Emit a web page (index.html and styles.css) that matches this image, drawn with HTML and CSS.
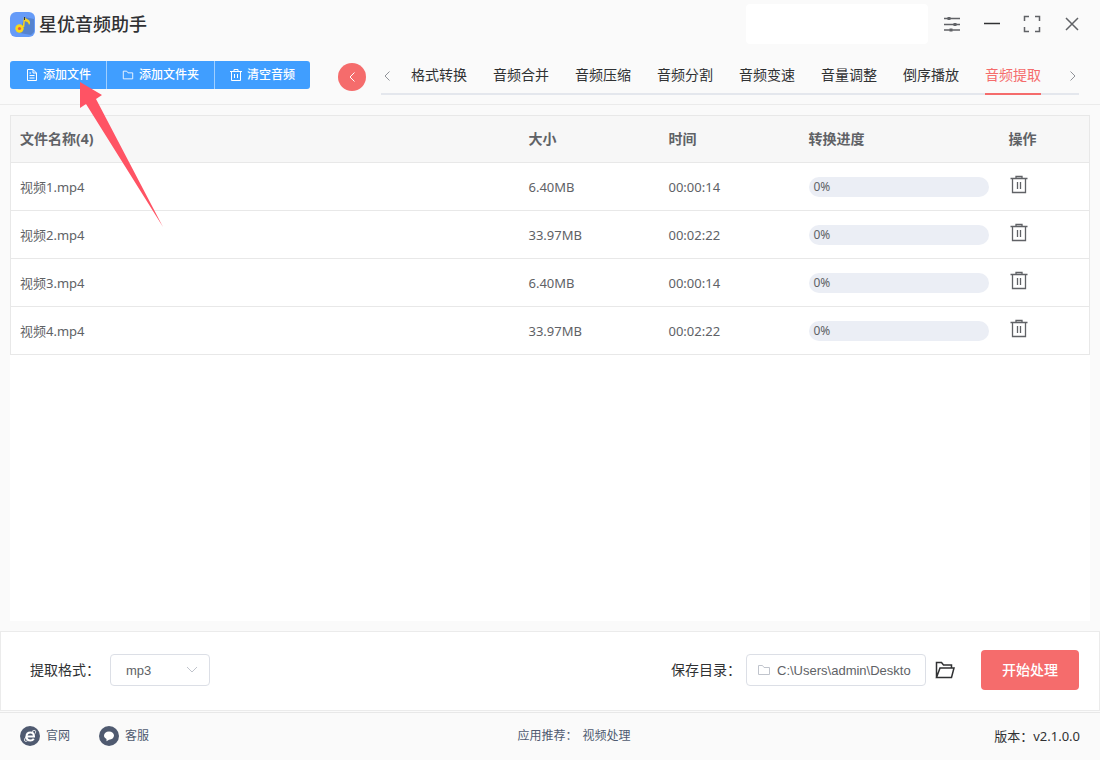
FILE: index.html
```html
<!DOCTYPE html>
<html lang="zh-CN">
<head>
    <meta charset="UTF-8">
    <meta name="viewport" content="width=device-width, initial-scale=1.0">
    <title>星优音频助手</title>
    <link rel="stylesheet" href="styles.css">
</head>
<body>
    <!-- shared icons -->
    <svg class="sprite" aria-hidden="true">
        <symbol id="trash" viewBox="0 0 18 20">
            <path d="M0.5 3.5h17M6 3V1.5h6V3M2.5 4v13.5h13V4M7.500 7v7M10.500 7v7"/>
        </symbol>
        <symbol id="folder" viewBox="0 0 14 12">
            <path d="M1.5 1.5h4l1.5 2h5.500v7h-11z"/>
        </symbol>
        <symbol id="left" viewBox="0 0 8 12">
            <path d="M6.500 1.500L2 6l4.500 4.500"/>
        </symbol>
    </svg>

    <header class="titlebar">
        <svg class="logo" viewBox="0 0 25 25">
            <rect width="25" height="25" rx="6" fill="#659bf8"/>
            <path d="M14 5l10 2v13l-3 3-11-2z" fill="#5583cf"/>
            <path d="M13.500 15l1-9.500" stroke="#f6d321" stroke-width="1.500"/>
            <path d="M14 5c1.500 2 5.500 2 6 5 .3 1.500-.5 2.500-1 3-.5-3-2.500-3.500-4.500-4z" fill="#f6d321"/>
            <circle cx="9.500" cy="16.500" r="4.200" fill="#fbd918"/>
            <circle cx="9.500" cy="16.500" r="1.600" fill="#ec5847"/>
            <path d="M14.500 5v3" stroke="#333" stroke-width="1"/>
        </svg>
        <h1>星优音频助手</h1>
        <div class="blank"></div>
        <div class="window-buttons">
            <button aria-label="设置">
                <svg width="16" height="16" viewBox="0 0 16 16"><path d="M0 2.500h16M0 8.500h16M0 14h16"/><path class="dot" d="M5 1v3M11 7v3M7 12.500v3"/></svg>
            </button>
            <button aria-label="最小化">
                <svg width="16" height="16" viewBox="0 0 16 16"><path class="dark" d="M0 7.500h16"/></svg>
            </button>
            <button aria-label="最大化">
                <svg width="18" height="18" viewBox="0 0 18 18"><path d="M1.500 6V1.500H6M12 1.500h4.500V6M16.500 12v4.500H12M6 16.500H1.500V12"/></svg>
            </button>
            <button aria-label="关闭">
                <svg width="14" height="14" viewBox="0 0 14 14"><path d="M1 1l12 12M13 1L1 13"/></svg>
            </button>
        </div>
    </header>

    <div class="toolbar">
        <div class="button-group">
            <button>
                <svg width="12" height="12" viewBox="0 0 12 12"><path d="M1.500.5H7l3.500 3.500v7.500h-9zM7 .5V4h3.500M3.500 4H5M3.500 6.500h5M3.500 9h5"/></svg>
                添加文件
            </button>
            <button>
                <svg width="12" height="12"><use href="#folder"/></svg>
                添加文件夹
            </button>
            <button>
                <svg width="12" height="12" viewBox="0 0 12 12"><path d="M0 2.500h12M4 2V.5h4V2M1.500 3v8.500h9V3M4.500 5v4M7.500 5v4"/></svg>
                清空音频
            </button>
        </div>
        <button class="back" aria-label="返回"><svg width="8" height="12"><use href="#left"/></svg></button>
        <nav class="tabs">
            <button class="arrow" aria-label="向左"><svg width="8" height="12"><use href="#left"/></svg></button>
            <a href="#">格式转换</a>
            <a href="#">音频合并</a>
            <a href="#">音频压缩</a>
            <a href="#">音频分割</a>
            <a href="#">音频变速</a>
            <a href="#">音量调整</a>
            <a href="#">倒序播放</a>
            <a href="#" class="active">音频提取</a>
            <button class="arrow next" aria-label="向右"><svg width="8" height="12"><use href="#left"/></svg></button>
        </nav>
    </div>

    <main>
        <table>
            <thead>
                <tr>
                    <th>文件名称(4)</th>
                    <th class="col-size">大小</th>
                    <th class="col-time">时间</th>
                    <th class="col-progress">转换进度</th>
                    <th class="col-action">操作</th>
                </tr>
            </thead>
            <tbody>
                <tr>
                    <td>视频1.mp4</td>
                    <td>6.40MB</td>
                    <td>00:00:14</td>
                    <td><div class="progress">0%</div></td>
                    <td><button class="delete" aria-label="删除"><svg width="18" height="20"><use href="#trash"/></svg></button></td>
                </tr>
                <tr>
                    <td>视频2.mp4</td>
                    <td>33.97MB</td>
                    <td>00:02:22</td>
                    <td><div class="progress">0%</div></td>
                    <td><button class="delete" aria-label="删除"><svg width="18" height="20"><use href="#trash"/></svg></button></td>
                </tr>
                <tr>
                    <td>视频3.mp4</td>
                    <td>6.40MB</td>
                    <td>00:00:14</td>
                    <td><div class="progress">0%</div></td>
                    <td><button class="delete" aria-label="删除"><svg width="18" height="20"><use href="#trash"/></svg></button></td>
                </tr>
                <tr>
                    <td>视频4.mp4</td>
                    <td>33.97MB</td>
                    <td>00:02:22</td>
                    <td><div class="progress">0%</div></td>
                    <td><button class="delete" aria-label="删除"><svg width="18" height="20"><use href="#trash"/></svg></button></td>
                </tr>
            </tbody>
        </table>
    </main>

    <section class="settings">
        <label for="format">提取格式：</label>
        <div class="select-box">
            <select id="format">
                <option>mp3</option>
            </select>
            <svg width="12" height="8" viewBox="0 0 12 8"><path d="M1 1l5 5 5-5"/></svg>
        </div>
        <label for="path" class="path-label">保存目录：</label>
        <div class="path-box">
            <svg width="14" height="12"><use href="#folder"/></svg>
            <input id="path" type="text" value="C:\Users\admin\Deskto">
        </div>
        <button class="open" aria-label="打开目录">
            <svg width="20" height="18" viewBox="0 0 20 18"><path d="M1.500 16.500V1.500h5l2 2.500h8v3M1.500 16.500L5 7h14l-2.500 9.500z"/></svg>
        </button>
        <button class="start">开始处理</button>
    </section>

    <footer>
        <div class="links">
            <a href="#">
                <svg width="20" height="20" viewBox="0 0 20 20">
                    <circle cx="10" cy="10" r="10" fill="#4f5a70"/>
                    <path d="M7.500 10.500h6.500c0-2.500-1-4-3.500-4s-4 1.500-4 4 1.500 4 4 4c1.500 0 2.500-.5 3.300-1.800" fill="none" stroke="#fff" stroke-width="2"/>
                    <path d="M6.500 10c-3 4-2.500 6.500 1 4.800M12 5.500c3-2 4.500-1 3.200 2" fill="none" stroke="#fff" stroke-width="1"/>
                </svg>
                官网
            </a>
            <a href="#">
                <svg width="20" height="20" viewBox="0 0 20 20">
                    <circle cx="10" cy="10" r="10" fill="#4f5a70"/>
                    <path d="M10 5.500c3 0 5 1.800 5 4s-2 4.200-5 4.200l-2.500 1.500V13C6 12.200 5 11.200 5 9.500c0-2.200 2-4 5-4z" fill="#fff"/>
                </svg>
                客服
            </a>
        </div>
        <div class="recommend">应用推荐：<a href="#">视频处理</a></div>
        <div class="version">版本：v2.1.0.0</div>
    </footer>

    <!-- pointer to the add file button -->
    <svg class="pointer" width="84" height="146" viewBox="0 0 84 146">
        <path d="M0 0l22 13-6 4 67 128L6 22l-6 4z" fill="#ff5364"/>
    </svg>
</body>
</html>
```

FILE: styles.css
```css
* {
    box-sizing: border-box;
}
body {
    margin: 0;
    min-height: 100vh;
    display: flex;
    flex-direction: column;
    position: relative;
    background-color: #fafafa;
    color: #303133;
    font-family: "Noto Sans", "Noto Sans CJK SC", sans-serif;
    font-size: 14px;
    line-height: 20px;
}
button {
    display: flex;
    align-items: center;
    justify-content: center;
    padding: 0;
    border: 0;
    background: none;
    color: inherit;
    font: inherit;
    white-space: nowrap;
    cursor: pointer;
}
a {
    color: inherit;
    text-decoration: none;
}
svg {
    display: block;
    flex: none;
    fill: none;
    stroke: currentColor;
}
.sprite {
    position: absolute;
    width: 0;
    height: 0;
}
.titlebar {
    display: flex;
    align-items: center;
    height: 48px;
    padding: 0 20px 0 10px;
}
.logo {
    width: 25px;
    height: 25px;
    stroke: none;
}
h1 {
    margin: 0 0 0 4px;
    font-size: 18px;
    font-weight: 500;
}
.blank {
    width: 182px;
    height: 40px;
    margin-left: auto;
    border-radius: 4px;
    background-color: #fff;
}
.window-buttons {
    display: flex;
    gap: 24px;
    margin-left: 16px;
    color: #606266;
}
.window-buttons button {
    width: 16px;
    height: 20px;
}
.window-buttons svg {
    stroke-width: 1.5;
}
.window-buttons .dot {
    stroke-width: 3;
}
.window-buttons .dark {
    stroke: #303133;
}
.toolbar {
    display: flex;
    align-items: center;
    height: 57px;
    padding: 2px 24px 0 10px;
    border-bottom: 1px solid #ebebeb;
}
.button-group {
    display: flex;
    flex: none;
    margin-bottom: 4px;
    border-radius: 3px;
    background-color: #409eff;
    color: #fff;
    font-size: 12px;
    font-weight: 500;
}
.button-group button {
    gap: 5px;
    height: 28px;
    padding: 0 15px 0 16px;
}
.button-group button + button {
    padding-left: 15px;
    border-left: 1px solid #a0cfff;
}
.back {
    flex: none;
    width: 28px;
    height: 28px;
    margin-left: 28px;
    border-radius: 50%;
    background-color: #f56c6c;
    color: #fff;
}
.tabs {
    display: flex;
    flex: 1;
    gap: 26px;
    height: 36px;
    margin-left: 15px;
    border-bottom: 2px solid #e4e7ed;
}
.tabs a {
    height: 36px;
    line-height: 32px;
    white-space: nowrap;
}
.tabs .active {
    border-bottom: 2px solid #f56c6c;
    color: #f56c6c;
}
.arrow {
    width: 12px;
    margin-right: -8px;
    color: #909399;
}
.arrow.next {
    margin: 0 0 0 auto;
    transform: rotate(180deg);
}
main {
    flex: 1;
    margin: 10px;
    background-color: #fff;
}
table {
    width: 100%;
    table-layout: fixed;
    border-collapse: collapse;
    border: 1px solid #e8e8e8;
    color: #606266;
}
th, td {
    height: 48px;
    padding: 0 10px;
    border-bottom: 1px solid #e8e8e8;
    text-align: left;
}
th {
    height: 47px;
    background-color: #f7f7f7;
    font-weight: bold;
}
td {
    font-size: 13px;
}
th:first-child, td:first-child {
    padding-left: 9px;
}
.col-size, .col-time {
    width: 140px;
}
.col-progress {
    width: 200px;
}
.col-action {
    width: 91px;
}
.progress {
    height: 20px;
    padding-left: 5px;
    border-radius: 10px;
    background-color: #ebeef5;
    font-size: 12px;
}
.delete {
    width: 20px;
    height: 20px;
    margin-bottom: 4px;
}
.delete svg {
    stroke-width: 1.3;
}
.settings {
    display: flex;
    align-items: center;
    height: 80px;
    padding: 0 20px 2px 29px;
    border: 1px solid #ebebeb;
    background-color: #fff;
}
.select-box, .path-box {
    display: flex;
    align-items: center;
    height: 32px;
    margin-left: 10px;
    border: 1px solid #dcdfe6;
    border-radius: 4px;
    color: #c0c4cc;
}
.select-box {
    width: 100px;
    padding-right: 11px;
}
.path-box {
    width: 180px;
    margin-left: 5px;
    padding: 0 10px;
    gap: 6px;
}
select, input {
    flex: 1;
    min-width: 0;
    height: 30px;
    padding: 0;
    border: 0;
    outline: 0;
    background: none;
    color: #606266;
    font-family: "Liberation Sans", "Noto Sans CJK SC", sans-serif;
    font-size: 13px;
}
select {
    appearance: none;
    padding-left: 15px;
}
.path-label {
    margin-left: auto;
}
.open {
    margin-left: 9px;
}
.open svg {
    stroke-width: 1.5;
}
.start {
    width: 98px;
    height: 40px;
    margin-left: 26px;
    border-radius: 4px;
    background-color: #f56c6c;
    color: #fff;
    font-weight: 500;
}
footer {
    display: grid;
    grid-template-columns: 1fr auto 1fr;
    align-items: center;
    height: 48px;
    margin-top: 1px;
    padding: 0 20px 2px;
    border-top: 1px solid #e8e8e8;
    color: #4f5a70;
    font-size: 12px;
}
.links {
    display: flex;
    gap: 29px;
}
.links a {
    display: flex;
    align-items: center;
    gap: 6px;
}
.links svg {
    stroke: none;
}
.recommend {
    margin-left: 48px;
}
.recommend a {
    margin-left: 5px;
}
.version {
    justify-self: end;
    color: #303133;
    font-size: 13px;
}
/* lies over the toolbar and the table */
.pointer {
    position: absolute;
    top: 82px;
    left: 80px;
    stroke: none;
    pointer-events: none;
}
```
